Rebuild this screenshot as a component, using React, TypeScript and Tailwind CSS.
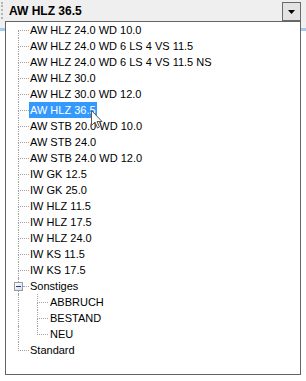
const ITEMS = [
  "AW HLZ 24.0 WD 10.0",
  "AW HLZ 24.0 WD 6 LS 4 VS 11.5",
  "AW HLZ 24.0 WD 6 LS 4 VS 11.5 NS",
  "AW HLZ 30.0",
  "AW HLZ 30.0 WD 12.0",
  "AW HLZ 36.5",
  "AW STB 20.0 WD 10.0",
  "AW STB 24.0",
  "AW STB 24.0 WD 12.0",
  "IW GK 12.5",
  "IW GK 25.0",
  "IW HLZ 11.5",
  "IW HLZ 17.5",
  "IW HLZ 24.0",
  "IW KS 11.5",
  "IW KS 17.5",
];

const CHILDREN = ["ABBRUCH", "BESTAND", "NEU"];

const SELECTED = "AW HLZ 36.5";

const DOT = "border-dotted border-[#a0a0a0]";

function Label({ text, selected }: { text: string; selected?: boolean }) {
  return (
    <span
      className={`px-[1px] whitespace-nowrap ${selected ? "bg-[#3399ff] text-white" : "text-black"}`}
    >
      {text}
    </span>
  );
}

// one tree branch: "├" or "└" (or "┌" for the first)
function Branch({ first, last }: { first?: boolean; last?: boolean }) {
  return (
    <div className="flex flex-col w-[11px] h-[16px] shrink-0">
      <div className={`h-[9px] border-b ${first ? "" : "border-l"} ${DOT}`} />
      <div className={`h-[7px] ${last ? "" : "border-l"} ${DOT}`} />
    </div>
  );
}

function TopRow({ text, first, last }: { text: string; first?: boolean; last?: boolean }) {
  return (
    <div className="flex h-[16px] items-center">
      <div className="w-[12px] shrink-0" />
      <Branch first={first} last={last} />
      <Label text={text} selected={text === SELECTED} />
    </div>
  );
}

export default function App() {
  return (
    <div
      className="relative w-[306px] h-[381px] overflow-hidden bg-white text-[11px] leading-[16px]"
      style={{ fontFamily: '"Liberation Sans", Arial, sans-serif' }}
    >
      {/* combo header */}
      <div className="flex items-center h-[21px] bg-[#efefef]">
        <div className="ml-[1px] w-[2px] h-[17px] border-l-2 border-dotted border-[#b4b4b4]" />
        <div className="ml-[6px] pt-[1px] text-[12px] leading-[20px] font-bold text-black flex-1">
          AW HLZ 36.5
        </div>
        <div className="mr-[5px] w-[19px] h-[19px] mt-[2px] border border-[#6a6a6a] bg-[#e3e3e3] flex items-center justify-center">
          <svg width="7" height="4" viewBox="0 0 7 4">
            <path d="M0 0h7L3.5 4z" fill="#000" />
          </svg>
        </div>
      </div>
      <div className="h-[7px] bg-[#f0f0f0]" />
      <div className="h-[3px] bg-[#a9c9ec]" />

      {/* dropdown tree */}
      <div className="absolute left-[5px] top-[21px] w-[296px] h-[354px] border border-[#646464] bg-white flex flex-col">
        {ITEMS.map((t, i) => (
          <TopRow key={t} text={t} first={i === 0} />
        ))}

        {/* Sonstiges group */}
        <div className="flex h-[16px] items-center">
          <div className="w-[8px] shrink-0" />
          <div className="flex flex-col w-[9px] h-[16px] shrink-0">
            <div className={`ml-[4px] h-[4px] border-l ${DOT}`} />
            <div className="w-[9px] h-[9px] border border-[#919caf] bg-[linear-gradient(135deg,#ffffff,#dcdcdc)] flex items-center justify-center">
              <div className="w-[5px] h-[1px] bg-[#1e3c8c]" />
            </div>
            <div className={`ml-[4px] flex-1 border-l ${DOT}`} />
          </div>
          <div className="h-[16px] w-[6px] shrink-0 flex flex-col">
            <div className={`h-[9px] border-b ${DOT}`} />
          </div>
          <Label text="Sonstiges" />
        </div>
        {CHILDREN.map((t, i) => (
          <div key={t} className="flex h-[16px] items-center">
            <div className="w-[12px] shrink-0" />
            <div className={`w-[19px] h-[16px] shrink-0 border-l ${DOT}`} />
            <Branch last={i === CHILDREN.length - 1} />
            <div className="w-[1px] shrink-0" />
            <Label text={t} />
          </div>
        ))}

        <TopRow text="Standard" last />
      </div>

      {/* mouse pointer */}
      <svg
        className="absolute left-[91px] top-[110px]"
        width="12"
        height="19"
        viewBox="0 0 12 19"
      >
        <path
          d="M0.5 0.5v15l3.5-3.5 2.5 6 2-1-2.5-5.5h5z"
          fill="#fff"
          stroke="#5a5a5a"
          strokeWidth="1"
        />
      </svg>
    </div>
  );
}
